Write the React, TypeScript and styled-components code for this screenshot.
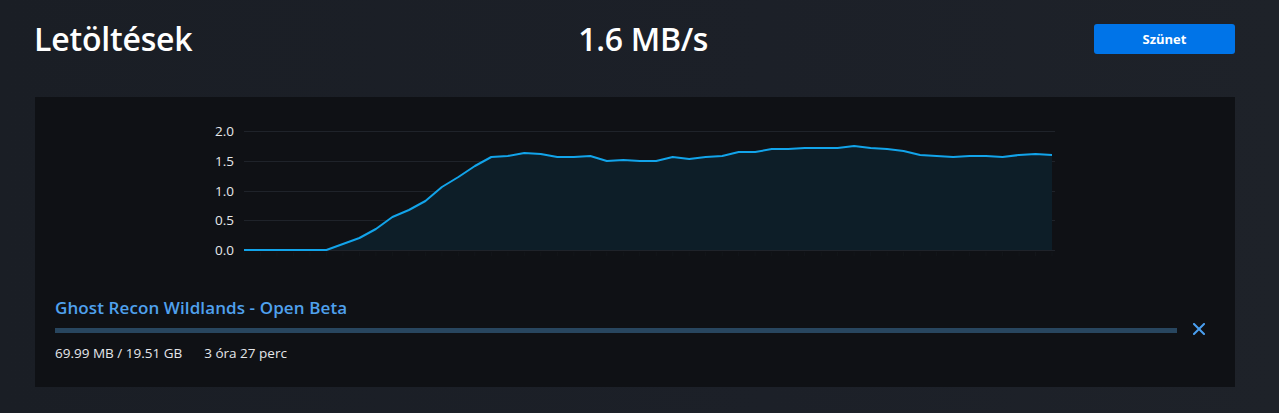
import React from "react";
import styled, { createGlobalStyle } from "styled-components";

const GlobalStyle = createGlobalStyle`
  html, body {
    margin: 0;
    padding: 0;
    background: #1b1f26;
  }
  body {
    font-family: "Open Sans", "Noto Sans", sans-serif;
    color: #ffffff;
  }
`;

const Page = styled.div`
  width: 1279px;
  height: 413px;
  box-sizing: border-box;
  padding: 0 44px 0 35px;
  background: linear-gradient(90deg, #1a1e25 0%, #1c2028 60%, #1e2229 100%);
  overflow: hidden;
`;

const Header = styled.header`
  height: 77px;
  margin-bottom: 20px;
  display: flex;
  align-items: center;
  justify-content: space-between;
`;

const Title = styled.h1`
  margin: 0 0 0 -1px;
  font-size: 32px;
  line-height: 1;
  font-weight: 600;
  letter-spacing: -0.2px;
  color: #ffffff;
`;

const Speed = styled.div`
  font-size: 32px;
  line-height: 1;
  font-weight: 600;
  letter-spacing: -0.3px;
  color: #ffffff;
`;

const PauseButton = styled.button`
  width: 141px;
  height: 30px;
  border: none;
  border-radius: 3px;
  background: #0074e8;
  color: #ffffff;
  font-family: "Open Sans", "Noto Sans", sans-serif;
  font-size: 13px;
  font-weight: 700;
  cursor: pointer;
  padding: 0;
`;

const Panel = styled.section`
  height: 290px;
  box-sizing: border-box;
  background: #0f1115;
  padding: 18px 30px 0 20px;
  display: flex;
  flex-direction: column;
`;

const ChartWrap = styled.div`
  margin-left: 135px;
  height: 150px;
  line-height: 0;
`;

const Download = styled.div`
  margin-top: 33px;
  display: flex;
  flex-direction: column;
`;

const GameTitle = styled.div`
  font-size: 17px;
  line-height: 20px;
  font-weight: 600;
  letter-spacing: 0.1px;
  color: #4fa1ee;
`;

const BarRow = styled.div`
  margin-top: 5px;
  display: flex;
  align-items: flex-start;
  gap: 16px;
`;

const Bar = styled.div`
  flex: 1;
  height: 5px;
  margin-top: 5px;
  background: #28465f;
`;

const CloseButton = styled.button`
  width: 12px;
  height: 12px;
  padding: 0;
  border: none;
  background: transparent;
  display: flex;
  cursor: pointer;
`;

const Stats = styled.div`
  margin-top: 9px;
  display: flex;
  gap: 22px;
  font-size: 13.5px;
  line-height: 18px;
  color: #e4e6ea;
`;

const values = [
  250, 250, 250, 250, 250, 250, 244, 238, 229, 217, 210, 201, 187, 177, 166,
  157, 156, 153, 154, 157, 157, 156, 161, 160, 161, 161, 157, 159, 157, 156,
  152, 152, 149, 149, 148, 148, 148, 146, 148, 149, 151, 155, 156, 157, 156,
  156, 157, 155, 154, 155,
];

const OX = 190;
const OY = 115;
const X0 = 244;
const X1 = 1052;
const step = (X1 - X0) / (values.length - 1);

const pts = values.map((y, i) => [X0 + i * step - OX, y - OY] as const);
const linePts = pts.map(([x, y]) => `${x.toFixed(1)},${y}`).join(" ");
const areaPts = `${X0 - OX},${250 - OY} ${linePts} ${X1 - OX},${250 - OY}`;

const grid = [
  { label: "2.0", y: 131 },
  { label: "1.5", y: 161 },
  { label: "1.0", y: 191 },
  { label: "0.5", y: 220 },
  { label: "0.0", y: 250 },
];

function Chart() {
  return (
    <svg width="870" height="150" viewBox="0 0 870 150">
      {grid.map((g) => (
        <g key={g.label}>
          <line
            x1={X0 - OX}
            x2={1055 - OX}
            y1={g.y - OY + 0.5}
            y2={g.y - OY + 0.5}
            stroke="#1f232a"
            strokeWidth="1"
          />
          <text
            x={234 - OX}
            y={g.y - OY + 5}
            textAnchor="end"
            fontFamily='"Open Sans", "Noto Sans", sans-serif'
            fontSize="13.5"
            fill="#e6e8eb"
          >
            {g.label}
          </text>
        </g>
      ))}
      {pts.map(([x], i) => (
        <line
          key={i}
          x1={x}
          x2={x}
          y1={250 - OY + 2}
          y2={250 - OY + 6}
          stroke="#13161a"
          strokeWidth="1"
        />
      ))}
      <polygon points={areaPts} fill="#0d1e28" />
      <polyline
        points={linePts}
        fill="none"
        stroke="#12a4ea"
        strokeWidth="2"
        strokeLinejoin="round"
      />
    </svg>
  );
}

export default function App() {
  return (
    <>
      <GlobalStyle />
      <Page>
        <Header>
          <Title>Letöltések</Title>
          <Speed>1.6 MB/s</Speed>
          <PauseButton>Szünet</PauseButton>
        </Header>
        <Panel>
          <ChartWrap>
            <Chart />
          </ChartWrap>
          <Download>
            <GameTitle>Ghost Recon Wildlands - Open Beta</GameTitle>
            <BarRow>
              <Bar />
              <CloseButton aria-label="Mégse">
                <svg width="12" height="12" viewBox="0 0 12 12">
                  <path
                    d="M1 1 L11 11 M11 1 L1 11"
                    stroke="#4a9ff0"
                    strokeWidth="2"
                    strokeLinecap="square"
                    fill="none"
                  />
                </svg>
              </CloseButton>
            </BarRow>
            <Stats>
              <span>69.99 MB / 19.51 GB</span>
              <span>3 óra 27 perc</span>
            </Stats>
          </Download>
        </Panel>
      </Page>
    </>
  );
}
